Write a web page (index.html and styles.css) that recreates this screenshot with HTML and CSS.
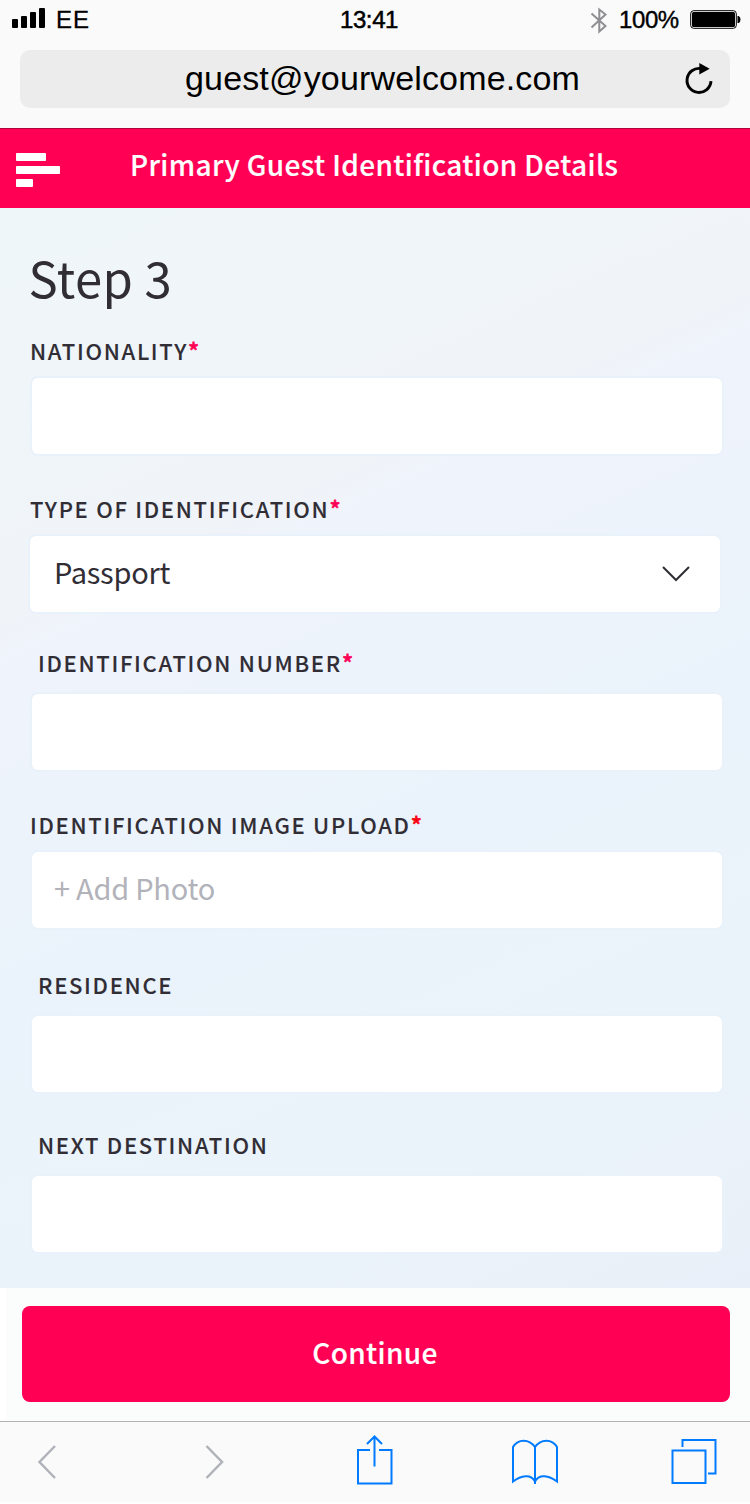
FILE: index.html
```html
<!DOCTYPE html>
<html lang="en">
<head>
<meta charset="utf-8">
<title>Primary Guest Identification Details</title>
<link rel="stylesheet" href="styles.css">
</head>
<body>
<div class="browser-top">
  <div class="status">
    <div class="carrier">
      <svg width="33" height="20" viewBox="0 0 33 20"><rect x="0" y="11" width="6" height="9" rx="1"/><rect x="9" y="8" width="6" height="12" rx="1"/><rect x="18" y="4" width="6" height="16" rx="1"/><rect x="27" y="0" width="6" height="20" rx="1"/></svg>
      <span class="network">EE</span>
    </div>
    <div class="clock">13:41</div>
    <div class="power">
      <svg class="bluetooth" width="18" height="28" viewBox="0 0 18 28"><path d="M1.500 7.500 15.500 20 9.300 25.500V3.500L15.500 8.500 1.500 21.500"/></svg>
      <span class="percent">100%</span>
      <svg width="51" height="20" viewBox="0 0 51 20"><rect x=".7" y=".7" width="45.600" height="17.600" rx="3" fill="none" stroke="#000" stroke-width="1"/><rect x="2" y="2" width="43" height="15" rx="1.500"/><path d="M47.500 6h1.200q1.800 1 1.800 3.500t-1.800 3.500h-1.200z"/></svg>
    </div>
  </div>
  <div class="address">
    <span class="url">guest@yourwelcome.com</span>
    <svg class="reload" width="30" height="34" viewBox="0 0 30 34"><path d="M27 19.200A12 12 0 1 1 17 6.600" fill="none" stroke="#000" stroke-width="2.900"/><path d="M15.300 1 25.700 6.800 15.300 12.500z"/></svg>
  </div>
</div>

<header class="app-bar">
  <svg class="menu" width="44" height="35" viewBox="0 0 44 35"><rect width="30" height="8" rx=".8"/><rect y="13" width="44" height="8" rx=".8"/><rect y="26" width="17" height="8" rx=".8"/></svg>
  <h1 class="title">Primary Guest Identification Details</h1>
</header>

<main class="form">
  <h2 class="step">Step 3</h2>
  <section class="group nationality">
    <label class="label">NATIONALITY<span class="required">*</span></label>
    <div class="field"></div>
  </section>
  <section class="group id-type">
    <label class="label">TYPE OF IDENTIFICATION<span class="required">*</span></label>
    <div class="field select"><span class="value">Passport</span>
      <svg width="28" height="16" viewBox="0 0 28 16"><path d="M1 1 14 14 27 1" fill="none" stroke="#312d35" stroke-width="2"/></svg>
    </div>
  </section>
  <section class="group id-number">
    <label class="label indented">IDENTIFICATION NUMBER<span class="required">*</span></label>
    <div class="field"></div>
  </section>
  <section class="group upload">
    <label class="label">IDENTIFICATION IMAGE UPLOAD<span class="required red">*</span></label>
    <div class="field"><span class="placeholder">+ Add Photo</span></div>
  </section>
  <section class="group residence">
    <label class="label indented">RESIDENCE</label>
    <div class="field"></div>
  </section>
  <section class="group destination">
    <label class="label indented">NEXT DESTINATION</label>
    <div class="field"></div>
  </section>
</main>

<footer class="actions"><button class="continue">Continue</button></footer>

<nav class="toolbar">
  <svg class="muted" width="20" height="34" viewBox="0 0 20 34"><path d="M18 1 2.500 17 18 33"/></svg>
  <svg class="muted forward" width="20" height="34" viewBox="0 0 20 34"><path d="M1.500 1 17 17 1.500 33"/></svg>
  <svg class="share" width="36" height="50" viewBox="0 0 36 50"><path d="M13 15H1v33.500h33.500V15H22M17.500 31.500V2M10 9l7.500-7.500L25 9"/></svg>
  <svg class="book" width="46" height="46" viewBox="0 0 46 46"><path d="M23 45V8C17-.5 6-.5 1 8v34.500c8-6 18-8 22 0 4-8 14-6 22 0V8C40-.5 29-.5 23 8"/></svg>
  <svg class="tabs" width="46" height="46" viewBox="0 0 46 46"><path d="M1.500 11.500h33V44h-33zM11.500 8V1h33v33.500h-7.500"/></svg>
</nav>
</body>
</html>
```

FILE: styles.css
```css
* { box-sizing: border-box; }

body {
  margin: 0;
  width: 750px;
  height: 1504px;
  overflow: hidden;
  background: #fff;
  color: #312d35;
  font-family: "Noto Sans CJK SC", "Noto Sans", sans-serif;
}

svg { display: block; flex: none; }

.browser-top {
  height: 128px;
  background: #fafafa;
  color: #000;
  font-family: "Liberation Sans", Arial, sans-serif;
}

.status {
  display: grid;
  grid-template-columns: 330px 78px 1fr;
  height: 50px;
  padding-top: 8px;
  font-size: 24px;
  line-height: 24px;
}
.carrier { display: flex; gap: 11px; padding-left: 12px; }
.network { letter-spacing: 1px; -webkit-text-stroke: .3px #000; }
.clock { text-align: center; letter-spacing: -.4px; -webkit-text-stroke: .5px #000; }
.power { display: flex; padding-left: 182px; }
.bluetooth { margin: -2px 11px 0 0; fill: none; stroke: #8e8e93; stroke-width: 2; }
.percent { width: 60px; margin-right: 11px; letter-spacing: -.4px; -webkit-text-stroke: .4px #000; }
.power svg:last-child { margin-top: 2px; }

.address {
  display: flex;
  align-items: center;
  height: 58px;
  margin: 0 20px;
  padding: 0 16px 0 165px;
  border-radius: 10px;
  background: #ececec;
}
.url { font-size: 34px; line-height: 56px; height: 58px; letter-spacing: .16px; }
.reload { margin-left: auto; }

.app-bar {
  display: flex;
  height: 80px;
  padding-left: 16px;
  border-top: 1px solid #b3003f;
  background: #ff0055;
  color: #fff;
}
.menu { margin-top: 24px; fill: #fff; }
.title {
  margin: 0 0 0 70px;
  font-size: 28px;
  font-weight: 500;
  line-height: 70px;
  letter-spacing: .38px;
  white-space: nowrap;
  -webkit-text-stroke: .15px #fff;
}

.form {
  height: 1080px;
  padding: 36px 28px 0 30px;
  background: linear-gradient(156deg, #eff6fa 0%, #f0f4f8 28%, #eff3fc 34%, #eaf3fb 56%, #ebf3fa 85%, #e8eff8 100%);
}
.step {
  margin: 0 0 0 -1.5px;
  font-size: 49px;
  font-weight: 400;
  line-height: 66px;
  letter-spacing: .4px;
}
.group { display: flex; flex-direction: column; gap: 12px; }
.nationality { margin-top: 24px; }
.id-type { margin-top: 38px; }
.id-number { margin-top: 34px; gap: 16px; }
.upload { margin-top: 38px; }
.residence { margin-top: 40px; gap: 16px; }
.destination { margin-top: 36px; gap: 16px; }

.label {
  height: 32px;
  font-size: 22px;
  font-weight: 500;
  line-height: 32px;
  letter-spacing: 1.7px;
  white-space: nowrap;
  -webkit-text-stroke: .1px;
}
.indented { padding-left: 8px; }
.required {
  color: #ff0055;
  font-size: 23px;
  line-height: 1;
  -webkit-text-stroke: .6px;
}
.red { color: #ff0010; }

.field {
  display: flex;
  align-items: center;
  width: 690px;
  height: 76px;
  margin-left: 2px;
  padding: 0 30px 0 22px;
  border-radius: 6px;
  background: #fff;
  box-shadow: 0 0 0 2px #e9f1fa;
  font-size: 29px;
  letter-spacing: -.25px;
  line-height: 70px;
}
.field span { height: 76px; }
.select { justify-content: space-between; margin-left: 0; padding-left: 24px; }
.placeholder { color: #b2b3ba; }

.actions {
  height: 133px;
  padding: 18px 20px 0 16px;
  border-left: 6px solid #fff;
  background: #fbfdfc;
}
.continue {
  display: block;
  width: 708px;
  height: 96px;
  padding: 0 2px 4px 0;
  border: 0;
  border-radius: 8px;
  background: #ff0055;
  color: #fff;
  font: 500 28px/92px "Noto Sans CJK SC", "Noto Sans", sans-serif;
  letter-spacing: .35px;
  -webkit-text-stroke: .15px #fff;
}

.toolbar {
  display: flex;
  align-items: center;
  height: 81px;
  padding-left: 37px;
  border-top: 1px solid #b2b2b2;
  background: #fafafa;
}
.toolbar svg { fill: none; stroke: #007aff; stroke-width: 2; }
.toolbar .muted { stroke: #b0b2ba; stroke-width: 2.5; }
.forward { margin-left: 148px; }
.share { margin: -4px 0 0 132px; }
.book { margin-left: 119px; }
.tabs { margin-left: 113px; }
```
